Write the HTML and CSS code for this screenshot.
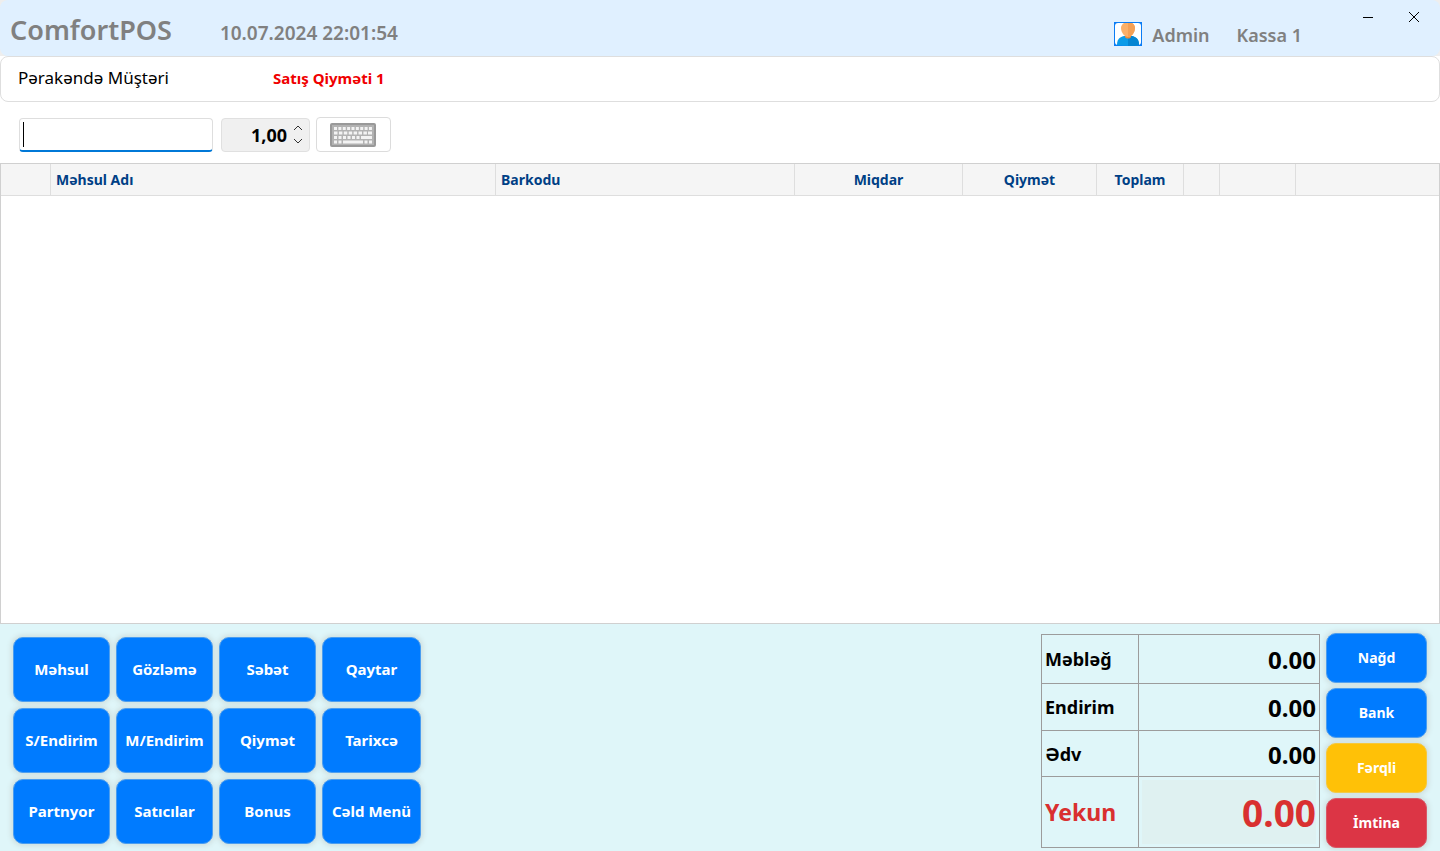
FILE: index.html
```html
<!DOCTYPE html>
<html lang="az">
<head>
<meta charset="utf-8">
<title>ComfortPOS</title>
<link rel="stylesheet" href="styles.css">
</head>
<body>
<div class="app">
  <div class="titlebar-back">
    <header class="titlebar">
      <h1 class="brand">ComfortPOS</h1>
      <time class="clock">10.07.2024 22:01:54</time>
      <div class="session">
        <svg class="avatar" viewBox="0 0 28 24" aria-hidden="true">
          <rect width="28" height="24" fill="#0a7cf5"/>
          <rect x="1" y="1" width="26" height="22" rx="3" fill="#fff"/>
          <path d="M3 23c0-5 2-8 7-9h8c5 1 7 4 7 9-3 1-19 1-22 0z" fill="#0b9be8"/>
          <path d="M14 14h4c5 1 7 4 7 9-2 1-7 1-11 1z" fill="#0585d2"/>
          <path d="M11 12h6v3c-1 2-5 2-6 0z" fill="#e98c3c"/>
          <path d="M10 1h8c2 1 3 3 3 5 0 5-4 9-7 9s-7-4-7-9c0-2 1-4 3-5z" fill="#fbb069"/>
          <path d="M14 1h4c2 1 3 3 3 5 0 5-4 9-7 9z" fill="#f4a055"/>
        </svg>
        <span class="user">Admin</span>
        <span class="till">Kassa 1</span>
      </div>
      <div class="window-buttons">
        <button class="window-button" type="button" aria-label="Minimize"><svg viewBox="0 0 12 12"><path d="M1 6.5h10"/></svg></button>
        <button class="window-button" type="button" aria-label="Close"><svg viewBox="0 0 12 12"><path d="M1 1l10 10M11 1L1 11"/></svg></button>
      </div>
    </header>
  </div>

  <section class="customer">
    <span class="customer-name">Pərakəndə Müştəri</span>
    <span class="price-type">Satış Qiyməti 1</span>
  </section>

  <form class="entry">
    <input class="barcode" type="text" aria-label="Barkod">
    <div class="quantity">
      <input class="quantity-input" type="text" value="1,00" aria-label="Miqdar">
      <div class="stepper">
        <button class="step" type="button" aria-label="Artır"><svg viewBox="0 0 10 6"><path d="M1 5l4-4 4 4"/></svg></button>
        <button class="step" type="button" aria-label="Azalt"><svg viewBox="0 0 10 6"><path d="M1 1l4 4 4-4"/></svg></button>
      </div>
    </div>
    <button class="keyboard" type="button" aria-label="Klaviatura">
      <svg viewBox="0 0 46 24">
        <rect x="1" y="1" width="44" height="22" rx="1" fill="#b2b2b2" stroke="#999" stroke-width="2"/>
        <g stroke="#f3f3f3" stroke-width="3" fill="none">
          <path d="M4 5.5h38" stroke-dasharray="3 1.37"/>
          <path d="M4 10h33" stroke-dasharray="3.5 1.4"/><path d="M38 10h4"/>
          <path d="M4 14.500h30" stroke-dasharray="3 1.5"/><path d="M34 14.500h8"/>
          <path d="M4 19h3M8.500 19h3M13 19h20M34.500 19h3M39 19h3"/>
        </g>
      </svg>
    </button>
  </form>

  <main class="lines">
    <table class="lines-table">
      <colgroup><col class="c-mark"><col class="c-name"><col class="c-code"><col class="c-qty"><col class="c-price"><col class="c-total"><col class="c-edit"><col class="c-extra"><col></colgroup>
      <thead>
        <tr><th></th><th class="left">Məhsul Adı</th><th class="left">Barkodu</th><th>Miqdar</th><th>Qiymət</th><th>Toplam</th><th></th><th></th><th></th></tr>
      </thead>
    </table>
  </main>

  <footer class="footer">
    <nav class="actions">
      <button class="button" type="button">Məhsul</button>
      <button class="button" type="button">Gözləmə</button>
      <button class="button" type="button">Səbət</button>
      <button class="button" type="button">Qaytar</button>
      <button class="button" type="button">S/Endirim</button>
      <button class="button" type="button">M/Endirim</button>
      <button class="button" type="button">Qiymət</button>
      <button class="button" type="button">Tarixcə</button>
      <button class="button" type="button">Partnyor</button>
      <button class="button" type="button">Satıcılar</button>
      <button class="button" type="button">Bonus</button>
      <button class="button" type="button">Cəld Menü</button>
    </nav>
    <table class="totals">
      <tr><th scope="row">Məbləğ</th><td>0.00</td></tr>
      <tr><th scope="row">Endirim</th><td>0.00</td></tr>
      <tr><th scope="row">Ədv</th><td>0.00</td></tr>
      <tr class="grand"><th scope="row">Yekun</th><td>0.00</td></tr>
    </table>
    <div class="payments">
      <button class="button pay" type="button">Nağd</button>
      <button class="button pay" type="button">Bank</button>
      <button class="button pay mixed" type="button">Fərqli</button>
      <button class="button pay cancel" type="button">İmtina</button>
    </div>
  </footer>
</div>
</body>
</html>
```
FILE: styles.css
```css
* { box-sizing: border-box; }
body { margin: 0; background: #fff; color: #000; font-family: "Noto Sans", "Open Sans", sans-serif; }
button, input { font: inherit; color: inherit; }
button { padding: 0; border: 0; background: none; }
svg { display: block; }

.app { display: flex; flex-direction: column; min-height: 100vh; }

.titlebar-back { background: #eee; }
.titlebar { display: flex; height: 56px; padding-left: 10px; border-radius: 8px; background: #e0f0ff; color: #808080; font-weight: 600; }
.brand { margin: 0; padding-top: 12px; font-size: 27px; line-height: 36px; font-weight: 600; }
.clock { padding: 21px 0 0 48px; font-size: 19px; line-height: 24px; }
.session { display: flex; align-items: center; margin-left: auto; padding-top: 12px; font-size: 18px; line-height: 24px; }
.avatar { width: 28px; height: 24px; }
.user { margin: 2px 27px 0 10px; }
.till { margin-top: 2px; }
.window-buttons { display: flex; height: 34px; margin-left: 43px; padding-right: 3px; }
.window-button { display: grid; place-items: center; width: 46px; }
.window-button svg { width: 12px; height: 12px; fill: none; stroke: #000; }

.customer { display: flex; height: 46px; padding-left: 17px; border: 1px solid #dedede; border-radius: 8px; line-height: 42px; }
.customer-name { width: 255px; font-size: 17px; }
.price-type { color: #f00000; font-size: 15px; font-weight: 700; }

.entry { display: flex; align-items: center; gap: 8px; margin: 0; padding: 15px 19px 11px; }
.barcode { width: 194px; height: 34px; border: 1px solid #dedede; border-bottom: 2px solid #0078d7; border-radius: 4px; outline: 0; background: linear-gradient(#000, #000) 3px 3px / 1px 25px no-repeat #fff; }
.quantity { display: flex; width: 89px; height: 34px; border: 1px solid #e0e0e0; border-radius: 4px; background: #f0f0f0; }
.quantity-input { flex: 1; min-width: 0; padding: 0; border: 0; outline: 0; background: none; font-size: 18px; font-weight: 700; text-align: right; }
.stepper { display: flex; flex-direction: column; justify-content: center; gap: 7px; width: 22px; padding-left: 6px; }
.step svg { width: 10px; height: 6px; fill: none; stroke: #333; }
.keyboard { display: grid; place-items: center; width: 75px; height: 35px; margin-left: -2px; padding-right: 1px; border: 1px solid #dcdcdc; border-radius: 4px; background: #fff; }
.keyboard svg { width: 46px; height: 24px; }

.lines { flex: 1; border: 1px solid #d0d0d0; }
.lines-table { width: 100%; table-layout: fixed; border-collapse: separate; border-spacing: 0; }
.lines-table th { height: 32px; padding: 0 5px; border-right: 1px solid #dedede; border-bottom: 1px solid #dedede; background: #f5f5f5; color: #003f85; font-size: 14px; font-weight: 700; line-height: 20px; }
.lines-table th:last-child { border-right: 0; }
.lines-table .left { text-align: left; }
.c-mark { width: 50px; }
.c-name { width: 445px; }
.c-code { width: 299px; }
.c-qty { width: 168px; }
.c-price { width: 134px; }
.c-total { width: 87px; }
.c-edit { width: 36px; }
.c-extra { width: 76px; }

.footer { display: flex; align-items: flex-start; padding: 9px 13px 3px; background: #dff6f9; }
.actions { display: grid; grid-template-columns: 97px 97px 97px 99px; grid-auto-rows: 65px; gap: 6px; margin-top: 4px; }
.button { padding-bottom: 2px; border: 1px solid #4a9df0; border-radius: 10px; background: #007bff; box-shadow: 0 0 5px 2px #cfdfdf; color: #fff; font-size: 15px; font-weight: 700; line-height: 20px; white-space: nowrap; }
.totals { width: 279px; margin: 1px 6px 0 auto; border-collapse: collapse; }
.totals th, .totals td { height: 47px; padding: 2px 3px 0; border: 1px solid #9c9c9c; line-height: 30px; font-weight: 700; }
.totals tr:first-child th, .totals tr:first-child td { height: 49px; }
.totals tr:nth-child(3) th, .totals tr:nth-child(3) td { height: 46px; }
.totals th { width: 97px; padding: 0 3px; font-size: 18px; text-align: left; }
.totals td { font-size: 24px; text-align: right; }
.totals .grand th, .totals .grand td { height: 71px; color: #d93030; }
.totals .grand th { font-size: 23px; }
.totals .grand td { padding-top: 2px; background: #dff1f1; box-shadow: inset 0 0 0 3px #dff6f9; font-size: 37px; }
.payments { display: grid; grid-auto-rows: 50px; row-gap: 5px; width: 101px; }
.pay { padding-bottom: 0; font-size: 14px; }
.mixed { border-color: #f6c83c; background: #ffc107; }
.cancel { border-color: #d95867; background: #dc3545; }
```
